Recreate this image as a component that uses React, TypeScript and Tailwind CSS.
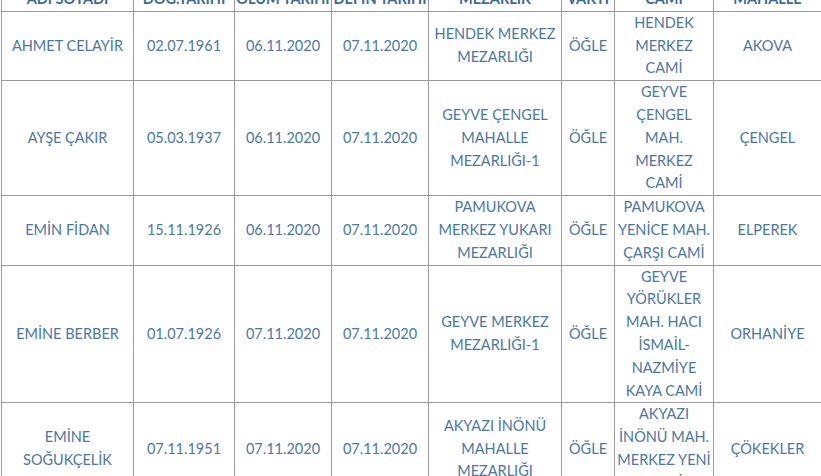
import React from 'react';

type Row = {
  name: string[];
  dog: string;
  olum: string;
  defin: string;
  mezarlik: string[];
  vakit: string;
  cami: string[];
  mahalle: string;
};

const rows: Row[] = [
  {
    name: ['AHMET CELAYİR'],
    dog: '02.07.1961',
    olum: '06.11.2020',
    defin: '07.11.2020',
    mezarlik: ['HENDEK MERKEZ', 'MEZARLIĞI'],
    vakit: 'ÖĞLE',
    cami: ['HENDEK', 'MERKEZ', 'CAMİ'],
    mahalle: 'AKOVA',
  },
  {
    name: ['AYŞE ÇAKIR'],
    dog: '05.03.1937',
    olum: '06.11.2020',
    defin: '07.11.2020',
    mezarlik: ['GEYVE ÇENGEL', 'MAHALLE', 'MEZARLIĞI-1'],
    vakit: 'ÖĞLE',
    cami: ['GEYVE', 'ÇENGEL', 'MAH.', 'MERKEZ', 'CAMİ'],
    mahalle: 'ÇENGEL',
  },
  {
    name: ['EMİN FİDAN'],
    dog: '15.11.1926',
    olum: '06.11.2020',
    defin: '07.11.2020',
    mezarlik: ['PAMUKOVA', 'MERKEZ YUKARI', 'MEZARLIĞI'],
    vakit: 'ÖĞLE',
    cami: ['PAMUKOVA', 'YENİCE MAH.', 'ÇARŞI CAMİ'],
    mahalle: 'ELPEREK',
  },
  {
    name: ['EMİNE BERBER'],
    dog: '01.07.1926',
    olum: '07.11.2020',
    defin: '07.11.2020',
    mezarlik: ['GEYVE MERKEZ', 'MEZARLIĞI-1'],
    vakit: 'ÖĞLE',
    cami: ['GEYVE', 'YÖRÜKLER', 'MAH. HACI', 'İSMAİL-', 'NAZMİYE', 'KAYA CAMİ'],
    mahalle: 'ORHANİYE',
  },
  {
    name: ['EMİNE', 'SOĞUKÇELİK'],
    dog: '07.11.1951',
    olum: '07.11.2020',
    defin: '07.11.2020',
    mezarlik: ['AKYAZI İNÖNÜ', 'MAHALLE', 'MEZARLIĞI'],
    vakit: 'ÖĞLE',
    cami: ['AKYAZI', 'İNÖNÜ MAH.', 'MERKEZ YENİ', 'CAMİ'],
    mahalle: 'ÇÖKEKLER',
  },
];

const headers = ['ADI SOYADI', 'DOĞ.TARİHİ', 'ÖLÜM TARİHİ', 'DEFİN TARİHİ', 'MEZARLIK', 'VAKTİ', 'CAMİ', 'MAHALLE'];

const Lines: React.FC<{ lines: string[] }> = ({ lines }) => (
  <>
    {lines.map((l, i) => (
      <div key={i}>{l}</div>
    ))}
  </>
);

const td = 'border border-[#9a9a9a] px-0 py-0 text-center align-middle';

export default function App() {
  return (
    <div className="h-[476px] w-[821px] overflow-hidden bg-white pl-[1px]">
      <table
        className="-mt-[13px] w-[820px] table-fixed border-collapse text-[14.5px] leading-[22.8px] text-[#4a78a2]"
        style={{ fontFamily: 'Lato, "Noto Sans", sans-serif' }}
      >
        <colgroup>
          <col className="w-[132px]" />
          <col className="w-[101px]" />
          <col className="w-[97px]" />
          <col className="w-[97px]" />
          <col className="w-[133px]" />
          <col className="w-[53px]" />
          <col className="w-[99px]" />
          <col className="w-[108px]" />
        </colgroup>
        <thead>
          <tr>
            {headers.map((h) => (
              <th key={h} className={`${td} whitespace-nowrap font-bold text-[#3a6a96]`}>
                {h}
              </th>
            ))}
          </tr>
        </thead>
        <tbody>
          {rows.map((r, i) => (
            <tr key={i}>
              <td className={td}>
                <Lines lines={r.name} />
              </td>
              <td className={td}>{r.dog}</td>
              <td className={td}>{r.olum}</td>
              <td className={td}>{r.defin}</td>
              <td className={td}>
                <Lines lines={r.mezarlik} />
              </td>
              <td className={td}>{r.vakit}</td>
              <td className={`${td} whitespace-nowrap`}>
                <Lines lines={r.cami} />
              </td>
              <td className={td}>{r.mahalle}</td>
            </tr>
          ))}
        </tbody>
      </table>
    </div>
  );
}
